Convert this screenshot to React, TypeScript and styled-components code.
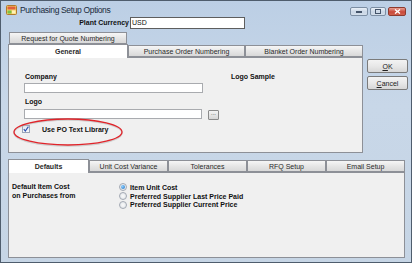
import styled, { createGlobalStyle } from "styled-components";

const Global = createGlobalStyle`
  html, body { margin: 0; padding: 0; background: #ffffff; }
  body { font-family: "Liberation Sans", Arial, sans-serif; }
  * { box-sizing: border-box; }
`;

const Window = styled.div`
  width: 412px;
  height: 263px;
  border: 1px solid #4f5d6d;
  background: linear-gradient(180deg, #bccfe5 0%, #c8d7e8 40%, #c6d5e5 100%);
  display: flex;
  flex-direction: column;
  position: relative;
  overflow: hidden;
`;

const TitleBar = styled.div`
  height: 14px;
  display: flex;
  align-items: center;
  padding: 3px 0 0 5px;
  position: relative;
`;

const Title = styled.span`
  margin-left: 3px;
  font-size: 8.5px;
  letter-spacing: -0.35px;
  color: #1b2a3c;
`;

const Controls = styled.div`
  position: absolute;
  right: 5px;
  top: 6px;
  display: flex;
  gap: 2px;
`;

const CtrlButton = styled.div<{ $close?: boolean; $w: number }>`
  width: ${(p) => p.$w}px;
  height: 9px;
  border: 1px solid ${(p) => (p.$close ? "#8e3a2e" : "#7c8ea3")};
  border-radius: 2px;
  background: ${(p) =>
    p.$close
      ? "linear-gradient(180deg, #e8a093 0%, #c9493a 55%, #d0604d 100%)"
      : "linear-gradient(180deg, #eaf0f7 0%, #c9d6e5 55%, #d4dfeb 100%)"};
  display: flex;
  align-items: center;
  justify-content: center;
`;

const Main = styled.div`
  display: flex;
  padding-left: 7px;
`;

const LeftCol = styled.div`
  width: 355px;
  display: flex;
  flex-direction: column;
`;

const CurrencyRow = styled.div`
  margin-top: 1px;
  height: 13px;
  display: flex;
  align-items: center;
`;

const BoldLabel = styled.span`
  font-size: 7px;
  font-weight: bold;
  color: #111;
  white-space: nowrap;
`;

const CurrencyLabel = styled(BoldLabel)`
  width: 121px;
  text-align: right;
`;

const TextBox = styled.div<{ $w: number; $h?: number }>`
  width: ${(p) => p.$w}px;
  height: ${(p) => p.$h ?? 10}px;
  background: #fff;
  border: 1px solid #a9abaf;
  font-size: 7px;
  line-height: ${(p) => (p.$h ?? 10) - 2}px;
  padding-left: 1px;
  color: #111;
`;

const CurrencyBox = styled(TextBox)`
  margin-left: 1px;
  border-color: #5e5e5e;
`;

const TabRow = styled.div<{ $indent?: number; $top?: number }>`
  display: flex;
  padding-left: ${(p) => p.$indent ?? 0}px;
  margin-top: ${(p) => p.$top ?? 0}px;
  position: relative;
  z-index: 1;
  align-items: flex-end;
`;

const Tab = styled.div<{ $w: number; $active?: boolean }>`
  width: ${(p) => p.$w}px;
  height: ${(p) => (p.$active ? 14 : 12)}px;
  margin-bottom: ${(p) => (p.$active ? -1 : 0)}px;
  border: 1px solid #8d9097;
  border-bottom: ${(p) => (p.$active ? "none" : "1px solid #8d9097")};
  background: ${(p) =>
    p.$active ? "#ffffff" : "linear-gradient(180deg, #f6f6f6 0%, #e6e6e6 50%, #d9d9d9 100%)"};
  font-size: 7px;
  font-weight: ${(p) => (p.$active ? "bold" : "normal")};
  color: #2a2a2a;
  display: flex;
  align-items: center;
  justify-content: center;
  white-space: nowrap;
`;

const Panel = styled.div<{ $h: number; $w: number }>`
  width: ${(p) => p.$w}px;
  height: ${(p) => p.$h}px;
  border: 1px solid #8d9097;
  background: #f0f0f0;
  position: relative;
`;

const TopPanel = styled(Panel)`
  display: flex;
  padding: 14px 0 0 15px;
`;

const FieldCol = styled.div`
  display: flex;
  flex-direction: column;
  width: 195px;
`;

const FieldLabel = styled(BoldLabel)`
  height: 10px;
  line-height: 10px;
  margin-left: 1px;
`;

const FieldLine = styled.div`
  display: flex;
  align-items: center;
  gap: 6px;
  margin-top: 1px;
  margin-bottom: 4px;
`;

const DotsButton = styled.div`
  width: 11px;
  height: 10px;
  margin-top: 2px;
  border: 1px solid #8a8a8a;
  border-radius: 1px;
  background: linear-gradient(180deg, #f4f4f4, #d6d6d6);
  font-size: 6px;
  line-height: 5px;
  text-align: center;
  color: #333;
`;

const CheckRow = styled.div`
  display: flex;
  align-items: center;
  margin-left: -2px;
  height: 10px;
`;

const CheckBox = styled.div`
  width: 8px;
  height: 8px;
  border: 1px solid #9aa5b8;
  background: linear-gradient(180deg, #e4e9f0, #f7f8fa);
  display: flex;
  align-items: center;
  justify-content: center;
`;

const CheckText = styled(BoldLabel)`
  margin-left: 12px;
`;

const LogoSample = styled(BoldLabel)`
  margin-left: 12px;
  margin-top: 1px;
`;

const Ellipse = styled.svg`
  position: absolute;
  left: 4px;
  top: 60px;
  overflow: visible;
`;

const ButtonCol = styled.div`
  margin-top: 44px;
  margin-left: 4px;
  display: flex;
  flex-direction: column;
  gap: 3px;
`;

const PushButton = styled.div`
  width: 41px;
  height: 14px;
  border: 1px solid #7b7b7b;
  border-radius: 2px;
  background: linear-gradient(180deg, #f3f3f3 0%, #e8e8e8 50%, #d7d7d7 100%);
  font-size: 7px;
  color: #222;
  display: flex;
  align-items: center;
  justify-content: center;
  u { text-decoration: underline; }
`;

const Lower = styled.div`
  margin-top: 6px;
  padding-left: 7px;
  display: flex;
  flex-direction: column;
`;

const LowerPanel = styled(Panel)`
  display: flex;
  padding: 10px 0 0 3px;
`;

const CostLabel = styled.div`
  width: 107px;
  font-size: 7px;
  font-weight: bold;
  line-height: 8.7px;
  color: #111;
`;

const RadioList = styled.div`
  display: flex;
  flex-direction: column;
`;

const RadioRow = styled.div`
  display: flex;
  align-items: center;
  height: 8.7px;
  gap: 3px;
`;

const Radio = styled.div<{ $on?: boolean }>`
  width: 8px;
  height: 8px;
  border-radius: 50%;
  border: 1px solid #a3a9b3;
  background: radial-gradient(circle, #fafafa 0%, #dde1e6 100%);
  display: flex;
  align-items: center;
  justify-content: center;
  &::after {
    content: "";
    width: 4px;
    height: 4px;
    border-radius: 50%;
    background: ${(p) => (p.$on ? "radial-gradient(circle at 35% 35%, #8fd0ff, #1d6fc2)" : "transparent")};
  }
`;

const RadioText = styled(BoldLabel)``;

const AppIcon = () => (
  <svg width="11" height="10" viewBox="0 0 11 10">
    <rect x="0.5" y="0.5" width="10" height="9" rx="1" fill="#f5d36b" stroke="#b07a2a" />
    <rect x="1.5" y="1.5" width="8" height="3" fill="#e0603c" />
    <rect x="1.5" y="5.5" width="4" height="3" fill="#7bc043" />
    <rect x="6" y="5.5" width="3.5" height="3" fill="#fff2b8" />
  </svg>
);

export default function App() {
  const lowerTabs = [
    { label: "Defaults", w: 81, active: true },
    { label: "Unit Cost Variance", w: 79 },
    { label: "Tolerances", w: 79 },
    { label: "RFQ Setup", w: 79 },
    { label: "Email Setup", w: 79 },
  ];
  const options = [
    "Item Unit Cost",
    "Preferred Supplier Last Price Paid",
    "Preferred Supplier Current Price",
  ];

  return (
    <>
      <Global />
      <Window>
        <TitleBar>
          <AppIcon />
          <Title>Purchasing Setup Options</Title>
          <Controls>
            <CtrlButton $w={18}>
              <svg width="6" height="3" viewBox="0 0 6 3">
                <rect x="0" y="1" width="6" height="2" fill="#44546a" />
              </svg>
            </CtrlButton>
            <CtrlButton $w={16}>
              <svg width="6" height="5" viewBox="0 0 6 5">
                <rect x="0.5" y="0.5" width="5" height="4" fill="none" stroke="#44546a" />
              </svg>
            </CtrlButton>
            <CtrlButton $w={18} $close>
              <svg width="7" height="5" viewBox="0 0 7 5">
                <path d="M1 0.5 L6 4.5 M6 0.5 L1 4.5" stroke="#fff" strokeWidth="1.4" />
              </svg>
            </CtrlButton>
          </Controls>
        </TitleBar>

        <Main>
          <LeftCol>
            <CurrencyRow>
              <CurrencyLabel>Plant Currency</CurrencyLabel>
              <CurrencyBox $w={115} $h={12}>USD</CurrencyBox>
            </CurrencyRow>

            <TabRow $indent={1} $top={3}>
              <Tab $w={118}>Request for Quote Numbering</Tab>
            </TabRow>
            <TabRow>
              <Tab $w={120} $active>General</Tab>
              <Tab $w={117}>Purchase Order Numbering</Tab>
              <Tab $w={118}>Blanket Order Numbering</Tab>
            </TabRow>

            <TopPanel $w={355} $h={96}>
              <FieldCol>
                <FieldLabel>Company</FieldLabel>
                <FieldLine>
                  <TextBox $w={179} />
                </FieldLine>
                <FieldLabel>Logo</FieldLabel>
                <FieldLine>
                  <TextBox $w={179} />
                  <DotsButton>...</DotsButton>
                </FieldLine>
                <CheckRow>
                  <CheckBox>
                    <svg width="6" height="6" viewBox="0 0 6 6">
                      <path d="M0.8 3.2 L2.3 5 L5.4 0.6" fill="none" stroke="#2b4fb0" strokeWidth="1.1" />
                    </svg>
                  </CheckBox>
                  <CheckText>Use PO Text Library</CheckText>
                </CheckRow>
              </FieldCol>
              <LogoSample>Logo Sample</LogoSample>
              <Ellipse width="110" height="28" viewBox="0 0 110 28">
                <ellipse cx="55" cy="15" rx="54" ry="13" fill="none" stroke="#b9b9b9" strokeWidth="1.5" opacity="0.6" />
                <ellipse cx="55" cy="14" rx="54" ry="13" fill="none" stroke="#e0242a" strokeWidth="1.3" />
              </Ellipse>
            </TopPanel>
          </LeftCol>

          <ButtonCol>
            <PushButton>
              <u>O</u>K
            </PushButton>
            <PushButton>
              <u>C</u>ancel
            </PushButton>
          </ButtonCol>
        </Main>

        <Lower>
          <TabRow>
            {lowerTabs.map((t) => (
              <Tab key={t.label} $w={t.w} $active={t.active}>
                {t.label}
              </Tab>
            ))}
          </TabRow>
          <LowerPanel $w={397} $h={86}>
            <CostLabel>
              Default Item Cost
              <br />
              on Purchases from
            </CostLabel>
            <RadioList>
              {options.map((o, i) => (
                <RadioRow key={o}>
                  <Radio $on={i === 0} />
                  <RadioText>{o}</RadioText>
                </RadioRow>
              ))}
            </RadioList>
          </LowerPanel>
        </Lower>
      </Window>
    </>
  );
}
